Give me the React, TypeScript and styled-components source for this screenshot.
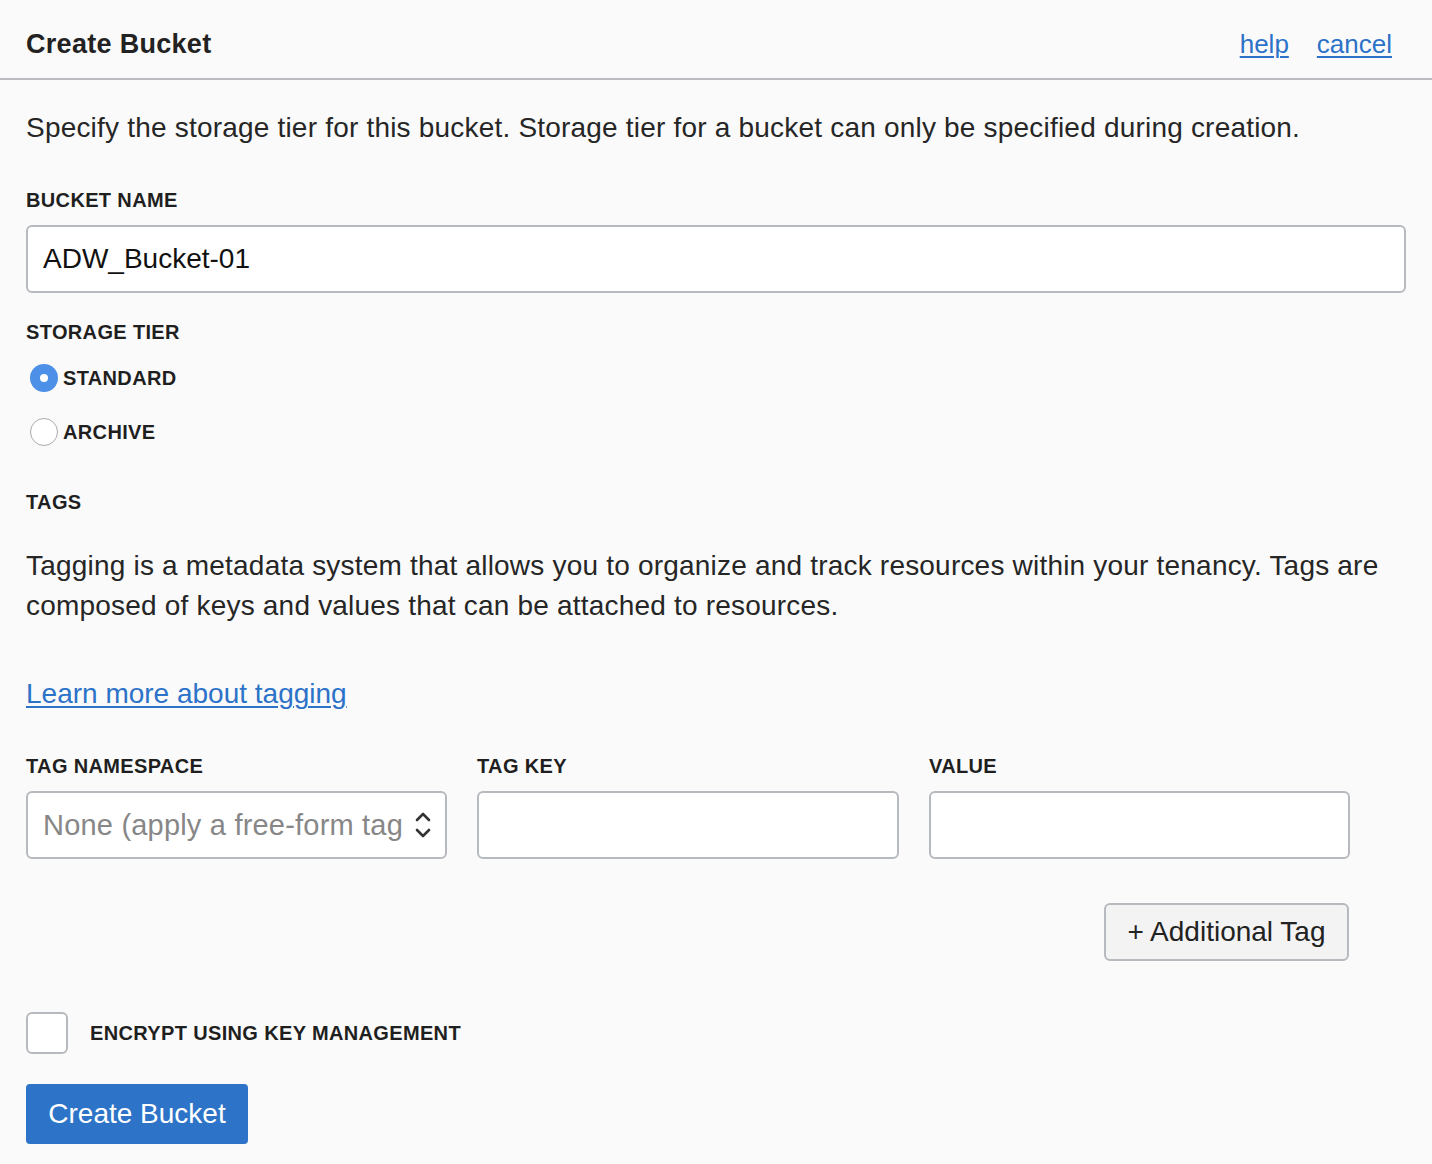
import React from "react";
import styled, { createGlobalStyle } from "styled-components";

const Global = createGlobalStyle`
  html, body { margin: 0; padding: 0; background: #fafafa; }
  body { font-family: "Liberation Sans", Arial, Helvetica, sans-serif; color: #262626; }
  * { box-sizing: border-box; }
`;

const Page = styled.div`
  width: 1432px;
  min-height: 1164px;
  background: #fafafa;
`;

const Header = styled.header`
  height: 80px;
  padding: 11px 40px 0 26px;
  display: flex;
  align-items: center;
  justify-content: space-between;
  border-bottom: 2px solid #b9bbbe;
`;

const Title = styled.h1`
  margin: 0;
  font-size: 27px;
  font-weight: bold;
  letter-spacing: 0.3px;
  color: #222;
`;

const HeaderLinks = styled.nav`
  display: flex;
  gap: 28px;
`;

const Link = styled.a<{ $size?: number }>`
  color: #2c72c8;
  font-size: ${(p) => p.$size ?? 26}px;
  text-decoration: underline;
  text-underline-offset: 3px;
  text-decoration-thickness: 2px;
  cursor: pointer;
`;

const Main = styled.main`
  padding: 0 26px 20px 26px;
  display: flex;
  flex-direction: column;
`;

const Text = styled.p<{ $mt: number }>`
  margin: ${(p) => p.$mt}px 0 0 0;
  font-size: 28px;
  letter-spacing: 0.2px;
  line-height: 40px;
  color: #262626;
`;

const Label = styled.div<{ $mt: number }>`
  margin-top: ${(p) => p.$mt}px;
  font-size: 20px;
  line-height: 24px;
  font-weight: bold;
  color: #1f1f1f;
  letter-spacing: 0.35px;
`;

const TextInput = styled.div`
  margin-top: 13px;
  height: 68px;
  border: 2px solid #b6b9bd;
  border-radius: 6px;
  background: #fff;
  display: flex;
  align-items: center;
  padding: 0 15px;
  font-size: 28px;
  color: #111;
`;

const RadioGroup = styled.div`
  margin-top: 7px;
  display: flex;
  flex-direction: column;
`;

const RadioRow = styled.label`
  height: 54px;
  display: flex;
  align-items: center;
  gap: 5px;
  padding-left: 4px;
  font-size: 20px;
  font-weight: bold;
  color: #1f1f1f;
  letter-spacing: 0.35px;
`;

const RadioDot = styled.span<{ $checked?: boolean }>`
  width: 28px;
  height: 28px;
  border-radius: 50%;
  flex: none;
  display: flex;
  align-items: center;
  justify-content: center;
  background: ${(p) => (p.$checked ? "#4c90e8" : "#fff")};
  border: ${(p) => (p.$checked ? "none" : "1.5px solid #a9abae")};
  &::after {
    content: "";
    width: 8px;
    height: 8px;
    border-radius: 50%;
    background: #fff;
    display: ${(p) => (p.$checked ? "block" : "none")};
  }
`;

const LinkLine = styled.div`
  margin-top: 48px;
  height: 40px;
  display: flex;
  align-items: center;
`;

const TagSection = styled.div`
  width: 1323px;
  display: flex;
  flex-direction: column;
`;

const TagGrid = styled.div`
  margin-top: 40px;
  display: grid;
  grid-template-columns: 421px 422px 421px;
  column-gap: 30px;
`;

const TagField = styled.div`
  display: flex;
  flex-direction: column;
`;

const TagLabel = styled.div`
  font-size: 20px;
  line-height: 24px;
  font-weight: bold;
  color: #1f1f1f;
  letter-spacing: 0.35px;
`;

const TagBox = styled.div`
  margin-top: 13px;
  height: 68px;
  border: 2px solid #b6b9bd;
  border-radius: 6px;
  background: #fff;
  display: flex;
  align-items: center;
  justify-content: space-between;
  padding: 0 12px 0 15px;
`;

const Placeholder = styled.span`
  font-size: 29px;
  letter-spacing: 0.2px;
  color: #878787;
  white-space: nowrap;
  overflow: hidden;
`;

const ButtonRow = styled.div`
  margin-top: 44px;
  display: flex;
  justify-content: flex-end;
`;

const SecondaryButton = styled.button`
  height: 58px;
  width: 245px;
  border: 2px solid #b6b9bd;
  border-radius: 6px;
  background: #f3f3f3;
  font-family: inherit;
  font-size: 28px;
  color: #222;
  padding: 0;
`;

const CheckRow = styled.label`
  margin-top: 51px;
  display: flex;
  align-items: center;
  gap: 22px;
  font-size: 20px;
  font-weight: bold;
  color: #1f1f1f;
  letter-spacing: 0.35px;
`;

const CheckBox = styled.span`
  width: 42px;
  height: 42px;
  border: 2px solid #b6b9bd;
  border-radius: 6px;
  background: #fff;
  flex: none;
`;

const PrimaryButton = styled.button`
  margin-top: 30px;
  align-self: flex-start;
  height: 60px;
  width: 222px;
  border: none;
  border-radius: 4px;
  background: #2d74c8;
  color: #fff;
  font-family: inherit;
  font-size: 28px;
  padding: 0;
`;

const Chevrons = () => (
  <svg width="20" height="32" viewBox="0 0 20 32" fill="none" stroke="#333" strokeWidth="2.6" strokeLinecap="round" strokeLinejoin="round">
    <path d="M4 11 L10 5 L16 11" />
    <path d="M4 21 L10 27 L16 21" />
  </svg>
);

export default function App() {
  return (
    <Page>
      <Global />
      <Header>
        <Title>Create Bucket</Title>
        <HeaderLinks>
          <Link>help</Link>
          <Link>cancel</Link>
        </HeaderLinks>
      </Header>
      <Main>
        <Text $mt={28}>
          Specify the storage tier for this bucket. Storage tier for a bucket can only be specified during creation.
        </Text>
        <Label $mt={40}>BUCKET NAME</Label>
        <TextInput>ADW_Bucket-01</TextInput>
        <Label $mt={27}>STORAGE TIER</Label>
        <RadioGroup>
          <RadioRow>
            <RadioDot $checked />
            STANDARD
          </RadioRow>
          <RadioRow>
            <RadioDot />
            ARCHIVE
          </RadioRow>
        </RadioGroup>
        <Label $mt={31}>TAGS</Label>
        <Text $mt={32}>
          Tagging is a metadata system that allows you to organize and track resources within your tenancy. Tags are composed of keys and values that can be attached to resources.
        </Text>
        <LinkLine>
          <Link $size={28}>Learn more about tagging</Link>
        </LinkLine>
        <TagSection>
          <TagGrid>
            <TagField>
              <TagLabel>TAG NAMESPACE</TagLabel>
              <TagBox>
                <Placeholder>None (apply a free-form tag</Placeholder>
                <Chevrons />
              </TagBox>
            </TagField>
            <TagField>
              <TagLabel>TAG KEY</TagLabel>
              <TagBox />
            </TagField>
            <TagField>
              <TagLabel>VALUE</TagLabel>
              <TagBox />
            </TagField>
          </TagGrid>
          <ButtonRow>
            <SecondaryButton>+ Additional Tag</SecondaryButton>
          </ButtonRow>
        </TagSection>
        <CheckRow>
          <CheckBox />
          ENCRYPT USING KEY MANAGEMENT
        </CheckRow>
        <PrimaryButton>Create Bucket</PrimaryButton>
      </Main>
    </Page>
  );
}
